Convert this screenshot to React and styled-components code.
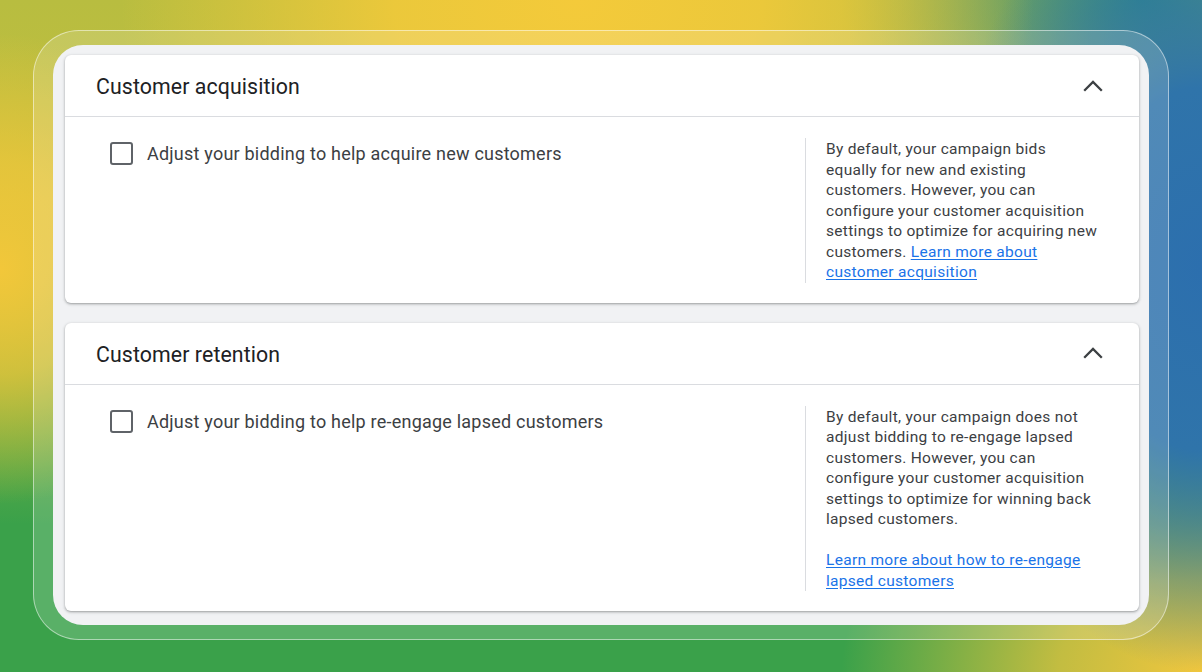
import React from "react";
import styled, { createGlobalStyle } from "styled-components";

const Global = createGlobalStyle`
  html, body { margin: 0; padding: 0; }
  body { font-family: Roboto, "Liberation Sans", sans-serif; }
  * { box-sizing: border-box; }
`;

const Page = styled.div`
  width: 1202px;
  height: 672px;
  padding: 30px 33px 32px 33px;
  background-color: #3aa14a;
  background-image:
    radial-gradient(ellipse 38% 55% at 48% 0%, #f4ca3a 0%, rgba(244, 202, 58, 0.85) 40%, rgba(244, 202, 58, 0) 100%),
    radial-gradient(ellipse 22% 60% at 100% 40%, #2c6fae 0%, #2f74aa 45%, rgba(47, 116, 170, 0) 100%),
    radial-gradient(ellipse 30% 35% at 100% 100%, #f0c63e 0%, rgba(240, 198, 62, 0.75) 40%, rgba(240, 198, 62, 0) 100%),
    radial-gradient(ellipse 18% 35% at 0% 40%, #f2c73a 0%, rgba(242, 199, 58, 0.7) 45%, rgba(242, 199, 58, 0) 100%),
    radial-gradient(ellipse 25% 30% at 95% 0%, #2f8a80 0%, rgba(47, 138, 128, 0) 100%),
    linear-gradient(180deg, #b8bd40 0%, #c2bf3e 30%, #7cb142 55%, #3aa14a 78%, #3aa14a 100%);
`;

const Glass = styled.div`
  height: 100%;
  border-radius: 46px;
  padding: 14px 19px;
  background: rgba(255, 255, 255, 0.16);
  border: 1.5px solid rgba(255, 255, 255, 0.5);
`;

const Panel = styled.div`
  height: 100%;
  border-radius: 30px;
  background: #f1f2f4;
  padding: 10px 10px 13px 12px;
  display: flex;
  flex-direction: column;
  gap: 20px;
`;

const Card = styled.section`
  background: #ffffff;
  border-radius: 6px;
  box-shadow: 0 1px 2px rgba(60, 64, 67, 0.35), 0 1px 3px 1px rgba(60, 64, 67, 0.12);
`;

const Header = styled.div`
  height: 62px;
  display: flex;
  align-items: center;
  justify-content: space-between;
  padding: 2px 36px 0 31px;
  border-bottom: 1px solid #dadce0;
`;

const Title = styled.h2`
  margin: 0;
  font-family: Roboto, "Liberation Sans", sans-serif;
  font-weight: 400;
  font-size: 21.3px;
  color: #202124;
  letter-spacing: 0.1px;
`;

const Chevron = styled.svg`
  width: 20px;
  height: 12px;
  display: block;
  margin-top: -2px;
`;

const Body = styled.div`
  display: flex;
  padding: 21px 0 20px 0;
`;

const Left = styled.div`
  flex: 1;
  padding: 4px 0 0 45px;
`;

const CheckRow = styled.label`
  display: flex;
  align-items: center;
  gap: 14px;
  cursor: pointer;
`;

const Box = styled.span`
  width: 23px;
  height: 23px;
  flex: none;
  border: 2.3px solid #5f6368;
  border-radius: 3px;
`;

const Label = styled.span`
  font-size: 18px;
  line-height: 23px;
  color: #3c4043;
  letter-spacing: 0.22px;
`;

const Aside = styled.div`
  width: 334px;
  flex: none;
  border-left: 1px solid #dadce0;
  padding: 1px 38px 0 20px;
  font-size: 15.5px;
  line-height: 20.5px;
  color: #3c4043;
  letter-spacing: 0.3px;
`;

const Para = styled.p`
  margin: 0;
  & + & {
    margin-top: 20.5px;
  }
`;

const Link = styled.a`
  color: #1a73e8;
  text-decoration: underline;
  text-underline-offset: 2px;
`;

const ChevronUp = () => (
  <Chevron viewBox="0 0 20 12">
    <polyline points="1.2,10.8 10,2 18.8,10.8" fill="none" stroke="#3c4043" strokeWidth="2.3" />
  </Chevron>
);

const Section = ({ title, label, children }) => (
  <Card>
    <Header>
      <Title>{title}</Title>
      <ChevronUp />
    </Header>
    <Body>
      <Left>
        <CheckRow>
          <Box />
          <Label>{label}</Label>
        </CheckRow>
      </Left>
      <Aside>{children}</Aside>
    </Body>
  </Card>
);

export default function App() {
  return (
    <>
      <Global />
      <Page>
        <Glass>
          <Panel>
            <Section title="Customer acquisition" label="Adjust your bidding to help acquire new customers">
              <Para>
                By default, your campaign bids equally for new and existing customers. However, you can
                configure your customer acquisition settings to optimize for acquiring new customers.{" "}
                <Link href="#">Learn more about customer acquisition</Link>
              </Para>
            </Section>
            <Section title="Customer retention" label="Adjust your bidding to help re-engage lapsed customers">
              <Para>
                By default, your campaign does not adjust bidding to re-engage lapsed customers. However,
                you can configure your customer acquisition settings to optimize for winning back lapsed
                customers.
              </Para>
              <Para>
                <Link href="#">Learn more about how to re-engage lapsed customers</Link>
              </Para>
            </Section>
          </Panel>
        </Glass>
      </Page>
    </>
  );
}
